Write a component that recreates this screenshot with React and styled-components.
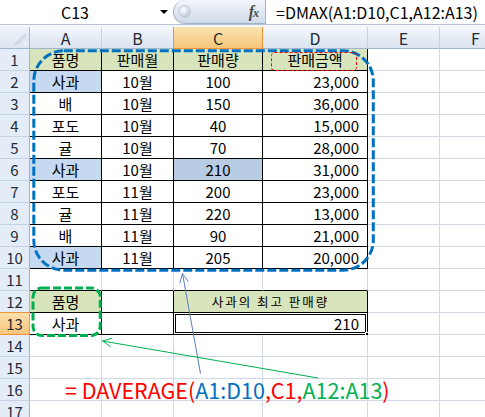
import React from 'react';
import styled, { createGlobalStyle } from 'styled-components';

const GlobalStyle = createGlobalStyle`
  html, body { margin: 0; padding: 0; background: #fff; }
  body {
    font-family: "Noto Sans CJK KR", "Noto Sans", sans-serif;
    overflow: hidden;
  }
`;

const Page = styled.div`
  position: relative;
  width: 485px;
  height: 417px;
  overflow: hidden;
  background: #fff;
`;

const FormulaBar = styled.div`
  display: flex;
  height: 24px;
  border-bottom: 1px solid #b6c3d4;
  background: #fff;
`;

const NameBox = styled.div`
  width: 173px;
  display: flex;
  align-items: center;
`;

const NameText = styled.div`
  width: 150px;
  text-align: center;
  font-size: 16px;
  line-height: 24px;
  color: #000;
`;

const DropArrow = styled.div`
  width: 0;
  height: 0;
  margin-left: 10px;
  border-left: 4px solid transparent;
  border-right: 4px solid transparent;
  border-top: 4px solid #000;
`;

const FxPill = styled.div`
  box-sizing: border-box;
  width: 93px;
  height: 24px;
  display: flex;
  align-items: center;
  justify-content: space-between;
  padding: 0 7px 0 5px;
  border: 1px solid #a3b3ca;
  border-top: none;
  border-top-left-radius: 12px;
  border-bottom-left-radius: 12px;
  background: linear-gradient(#f3f6fb 0%, #e2e9f3 50%, #d0dbea 100%);
`;

const Knob = styled.div`
  width: 11px;
  height: 11px;
  border-radius: 50%;
  background: radial-gradient(circle at 40% 35%, #ffffff 0%, #d9dfe7 45%, #a4afbf 100%);
  box-shadow: 0 0 0 1px #c2cad6;
`;

const Fx = styled.i`
  font-family: "Liberation Serif", serif;
  font-size: 16px;
  font-weight: bold;
  color: #4a4a4a;
  letter-spacing: -1px;
  small { font-size: 12px; }
`;

const FormulaText = styled.div`
  flex: 1;
  padding-left: 10px;
  font-size: 16px;
  line-height: 24px;
  color: #000;
  white-space: nowrap;
`;

const Strip = styled.div`
  height: 2px;
  background: #f4f6f9;
`;

const Sheet = styled.div`
  display: grid;
  grid-template-columns: 30px 72px 72px 89px 105px 72px 72px;
  grid-auto-rows: 22px;
`;

const Corner = styled.div`
  position: relative;
  box-sizing: border-box;
  background: linear-gradient(#eef2f8, #dde5f0);
  border-right: 1px solid #9eb6ce;
  border-bottom: 1px solid #9eb6ce;
  &::after {
    content: "";
    position: absolute;
    right: 3px;
    bottom: 3px;
    width: 13px;
    height: 13px;
    background: linear-gradient(135deg, transparent 50%, #c9d3e0 50%, #f6f8fb 100%);
  }
`;

const ColHeader = styled.div`
  box-sizing: border-box;
  display: flex;
  align-items: center;
  justify-content: center;
  font-size: 16px;
  color: ${p => (p.$active ? '#2b2b2b' : '#1f2a36')};
  background: ${p =>
    p.$active
      ? 'linear-gradient(#fbe3b4 0%, #f8d393 55%, #f5c57a 100%)'
      : 'linear-gradient(#f4f7fb 0%, #e6ecf5 55%, #dbe4f1 100%)'};
  border-right: 1px solid ${p => (p.$active ? '#f29436' : '#c5d2e3')};
  border-bottom: 1px solid ${p => (p.$active ? '#f29436' : '#9eb6ce')};
  box-shadow: ${p => (p.$active ? '-1px 0 0 #f29436' : 'none')};
`;

const RowHeader = styled.div`
  box-sizing: border-box;
  display: flex;
  align-items: center;
  justify-content: center;
  font-size: 15px;
  color: #1f2a36;
  background: ${p =>
    p.$active ? 'linear-gradient(#fbdfa9, #f6c67e)' : '#e4ecf7'};
  border-right: 1px solid ${p => (p.$active ? '#f29436' : '#9eb6ce')};
  border-bottom: 1px solid ${p => (p.$active ? '#f29436' : '#c5d2e3')};
  box-shadow: ${p => (p.$active ? '0 -1px 0 #f29436' : 'none')};
`;

const Cell = styled.div`
  position: relative;
  box-sizing: border-box;
  display: flex;
  align-items: center;
  justify-content: ${p => (p.$align === 'right' ? 'flex-end' : 'center')};
  padding: ${p => (p.$align === 'right' ? '0 8px 0 0' : '0')};
  grid-column: ${p => (p.$span ? `span ${p.$span}` : 'auto')};
  font-size: ${p => (p.$small ? '12.5px' : '15px')};
  letter-spacing: ${p => (p.$small ? '2px' : '0')};
  color: #000;
  white-space: nowrap;
  background: ${p => p.$bg || '#fff'};
  border-right: 1px solid ${p => (p.$rb ? '#000' : '#d0d7e5')};
  border-bottom: 1px solid ${p => (p.$bb ? '#000' : '#d0d7e5')};
`;

const SelectedCell = styled(Cell)`
  &::before {
    content: "";
    position: absolute;
    left: -1px;
    top: -1px;
    right: -1px;
    bottom: -1px;
    border: 3px double #000;
  }
  &::after {
    content: "";
    position: absolute;
    right: -4px;
    bottom: -4px;
    width: 5px;
    height: 5px;
    background: #000;
    box-shadow: 0 0 0 1px #fff;
  }
`;

const Overlay = styled.svg`
  position: absolute;
  left: 0;
  top: 0;
  pointer-events: none;
`;

const Annotation = styled.div`
  position: absolute;
  left: 65px;
  top: 379px;
  font-size: 21.5px;
  line-height: 22px;
  white-space: nowrap;
  color: #ff0000;
`;

const Part = styled.span`
  color: ${p => p.$c};
`;

const GREEN = '#d8e4bc';
const BLUE_A = '#c5d9f1';
const BLUE_C = '#b8cce4';

const data = [
  ['품명', '판매월', '판매량', '판매금액'],
  ['사과', '10월', '100', '23,000'],
  ['배', '10월', '150', '36,000'],
  ['포도', '10월', '40', '15,000'],
  ['귤', '10월', '70', '28,000'],
  ['사과', '10월', '210', '31,000'],
  ['포도', '11월', '200', '23,000'],
  ['귤', '11월', '220', '13,000'],
  ['배', '11월', '90', '21,000'],
  ['사과', '11월', '205', '20,000'],
];

const COLS = ['A', 'B', 'C', 'D', 'E', 'F'];

function bgFor(r, c) {
  if (r === 0) return GREEN;
  if (c === 0 && data[r][0] === '사과') return BLUE_A;
  if (r === 5 && c === 2) return BLUE_C;
  return '#fff';
}

function arrowHead(tipX, tipY, tailX, tailY, len = 10, ang = 0.45) {
  const dx = tailX - tipX;
  const dy = tailY - tipY;
  const d = Math.hypot(dx, dy);
  const ux = dx / d;
  const uy = dy / d;
  const rot = a => [
    tipX + len * (ux * Math.cos(a) - uy * Math.sin(a)),
    tipY + len * (ux * Math.sin(a) + uy * Math.cos(a)),
  ];
  const [x1, y1] = rot(ang);
  const [x2, y2] = rot(-ang);
  return `${x1},${y1} ${tipX},${tipY} ${x2},${y2}`;
}

export default function App() {
  return (
    <Page>
      <GlobalStyle />
      <FormulaBar>
        <NameBox>
          <NameText>C13</NameText>
          <DropArrow />
        </NameBox>
        <FxPill>
          <Knob />
          <Fx>
            f<small>x</small>
          </Fx>
        </FxPill>
        <FormulaText>=DMAX(A1:D10,C1,A12:A13)</FormulaText>
      </FormulaBar>
      <Strip />
      <Sheet>
        <Corner />
        {COLS.map(c => (
          <ColHeader key={c} $active={c === 'C'}>
            {c}
          </ColHeader>
        ))}

        {data.map((row, r) => (
          <React.Fragment key={r}>
            <RowHeader>{r + 1}</RowHeader>
            {row.map((v, c) => (
              <Cell
                key={c}
                $bg={bgFor(r, c)}
                $align={r > 0 && c === 3 ? 'right' : 'center'}
                $rb
                $bb
              >
                {v}
              </Cell>
            ))}
            <Cell />
            <Cell />
          </React.Fragment>
        ))}

        <RowHeader>11</RowHeader>
        <Cell $bb />
        <Cell $bb />
        <Cell $bb />
        <Cell $bb />
        <Cell />
        <Cell />

        <RowHeader>12</RowHeader>
        <Cell $bg={GREEN} $rb $bb>
          품명
        </Cell>
        <Cell $rb $bb />
        <Cell $bg={GREEN} $span={2} $small $rb $bb>
          사과의 최고 판매량
        </Cell>
        <Cell />
        <Cell />

        <RowHeader $active>13</RowHeader>
        <Cell $rb $bb>
          사과
        </Cell>
        <Cell $rb $bb />
        <SelectedCell $span={2} $align="right" $rb $bb>
          210
        </SelectedCell>
        <Cell />
        <Cell />

        {[14, 15, 16, 17].map(n => (
          <React.Fragment key={n}>
            <RowHeader>{n}</RowHeader>
            <Cell />
            <Cell />
            <Cell />
            <Cell />
            <Cell />
            <Cell />
          </React.Fragment>
        ))}
      </Sheet>

      <Overlay width="485" height="417" viewBox="0 0 485 417">
        <rect
          x="33.8"
          y="50.8"
          width="339.5"
          height="219.4"
          rx="30"
          fill="none"
          stroke="#0070c0"
          strokeWidth="3"
          strokeDasharray="9 3"
        />
        <rect
          x="271.5"
          y="52.5"
          width="85"
          height="18"
          rx="3"
          fill="none"
          stroke="#ff0000"
          strokeWidth="1"
          strokeDasharray="3 2"
        />
        <rect
          x="33"
          y="288"
          width="67.2"
          height="47.5"
          rx="9"
          fill="none"
          stroke="#00b050"
          strokeWidth="3"
          strokeDasharray="8 3"
        />
        <line x1="200.5" y1="373.5" x2="182.5" y2="273.5" stroke="#5a7fbe" strokeWidth="1" />
        <polyline
          points={arrowHead(182.5, 273.5, 200.5, 373.5)}
          fill="none"
          stroke="#5a7fbe"
          strokeWidth="1"
        />
        <line x1="318" y1="378" x2="102.5" y2="341" stroke="#00b050" strokeWidth="1" />
        <polyline
          points={arrowHead(102.5, 341, 318, 378)}
          fill="none"
          stroke="#00b050"
          strokeWidth="1"
        />
      </Overlay>

      <Annotation>
        <Part $c="#ff0000">= DAVERAGE(</Part>
        <Part $c="#0070c0">A1:D10</Part>
        <Part $c="#ff0000">,C1,</Part>
        <Part $c="#00b050">A12:A13</Part>
        <Part $c="#ff0000">)</Part>
      </Annotation>
    </Page>
  );
}
